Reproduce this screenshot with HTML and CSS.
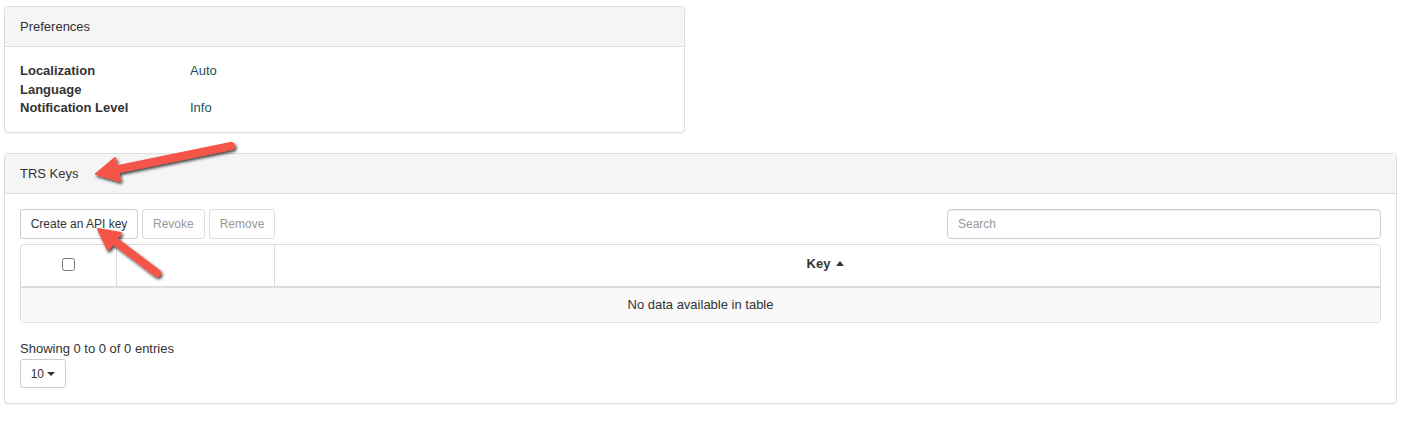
FILE: index.html
```html
<!DOCTYPE html>
<html>
<head>
<meta charset="utf-8">
<link rel="stylesheet" href="styles.css">
</head>
<body>
<div class="page">
  <div class="panel panel-prefs">
    <div class="panel-heading">Preferences</div>
    <div class="panel-body prefs-body">
      <div class="pref-row"><span class="pref-label">Localization</span><span class="pref-value">Auto</span></div>
      <div class="pref-row"><span class="pref-label">Language</span><span class="pref-value"></span></div>
      <div class="pref-row"><span class="pref-label">Notification Level</span><span class="pref-value">Info</span></div>
    </div>
  </div>

  <div class="panel panel-keys">
    <div class="panel-heading">TRS Keys</div>
    <div class="panel-body">
      <div class="toolbar">
        <div class="btn-group">
          <button class="btn btn-create">Create an API key</button>
          <button class="btn btn-disabled">Revoke</button>
          <button class="btn btn-disabled">Remove</button>
        </div>
        <input class="search" type="text" placeholder="Search">
      </div>
      <div class="table-wrap">
        <table class="keys-table">
          <thead>
            <tr>
              <th class="col-check"><input type="checkbox" class="check"></th>
              <th class="col-blank"></th>
              <th class="col-key">Key <span class="sort-up"></span></th>
            </tr>
          </thead>
          <tbody>
            <tr><td colspan="3" class="empty">No data available in table</td></tr>
          </tbody>
        </table>
      </div>
      <div class="info">Showing 0 to 0 of 0 entries</div>
      <button class="btn btn-len">10 <span class="caret"></span></button>
    </div>
  </div>

  <svg class="annotations" width="1407" height="421" viewBox="0 0 1407 421">
    <defs>
      <filter id="shadow" x="-20%" y="-40%" width="140%" height="180%">
        <feDropShadow dx="1.5" dy="2" stdDeviation="1.6" flood-color="#000" flood-opacity="0.75"/>
      </filter>
    </defs>
    <g filter="url(#shadow)" fill="#f5554a" stroke="#f5554a">
      <line x1="231" y1="146" x2="114" y2="170" stroke-width="8" stroke-linecap="round"/>
      <polygon points="96,174 120,181 115,158" stroke-width="2" stroke-linejoin="round"/>
      <line x1="157" y1="273" x2="112" y2="239" stroke-width="8" stroke-linecap="round"/>
      <polygon points="98,229 121,233 108,250" stroke-width="2" stroke-linejoin="round"/>
    </g>
  </svg>
</div>
</body>
</html>
```

FILE: styles.css
```css
* { box-sizing: border-box; }
html, body { margin: 0; padding: 0; background: #fff; }
body {
  font-family: "Liberation Sans", Arial, sans-serif;
  font-size: 13px;
  line-height: 1.42857;
  color: #333;
}
.page {
  position: relative;
  padding: 6px 10px 0 4px;
  width: 1407px;
  height: 421px;
}
.panel {
  background: #fff;
  border: 1px solid #ddd;
  border-radius: 4px;
  box-shadow: 0 1px 1px rgba(0,0,0,0.05);
  margin-bottom: 20px;
}
.panel-prefs { width: 681px; }
.panel-heading {
  background: #f5f5f5;
  border-bottom: 1px solid #ddd;
  border-radius: 3px 3px 0 0;
  padding: 11px 15px 9px;
  height: 40px;
  color: #333;
}
.panel-body { padding: 15px; }
.prefs-body { padding-bottom: 14px; }
.pref-row { display: flex; height: 18.5px; }
.pref-label { width: 170px; font-weight: bold; }
.pref-value { color: #244f5e; }

.toolbar {
  display: flex;
  justify-content: space-between;
  align-items: center;
}
.btn-group { display: flex; gap: 4px; }
.btn {
  font-family: inherit;
  font-size: 12px;
  height: 30px;
  padding: 0 10px;
  background: #fff;
  color: #333;
  border: 1px solid #ccc;
  border-radius: 3px;
}
.btn-create { padding: 0 9px; width: 118px; }
.btn-disabled { color: #999; border-color: #ddd; }
.search {
  width: 434px;
  height: 30px;
  border: 1px solid #ccc;
  border-radius: 4px;
  padding: 0 10px;
  font-family: inherit;
  font-size: 12px;
  color: #555;
  box-shadow: inset 0 1px 1px rgba(0,0,0,0.075);
}
.search::placeholder { color: #999; }

.table-wrap {
  margin-top: 5px;
  border: 1px solid #ddd;
  border-radius: 4px;
  overflow: hidden;
}
.keys-table {
  width: 100%;
  border-collapse: collapse;
}
.keys-table th {
  height: 42px;
  border-bottom: 2px solid #ddd;
  border-left: 1px solid #ddd;
  font-weight: bold;
  text-align: center;
  padding: 0 10px 1px;
}
.keys-table th:first-child { border-left: none; }
.col-check { width: 95px; }
.col-blank { width: 158px; }
.col-key { padding-right: 14px !important; }
.check {
  margin: 0;
  width: 13px;
  height: 13px;
  vertical-align: middle;
}
.sort-up {
  display: inline-block;
  width: 0; height: 0;
  border-left: 4px solid transparent;
  border-right: 4px solid transparent;
  border-bottom: 5px solid #333;
  vertical-align: 2px;
  margin-left: 2px;
}
.empty {
  background: #f9f9f9;
  text-align: center;
  height: 35px;
  padding: 0 0 0;
  padding-top: 1px;
}
.info { margin-top: 17px; }
.btn-len {
  height: 29px;
  width: 46px;
  padding: 0 9px;
  margin-top: 1px;
  border-radius: 3px;
}
.caret {
  display: inline-block;
  width: 0; height: 0;
  border-left: 4px solid transparent;
  border-right: 4px solid transparent;
  border-top: 4px solid #333;
  vertical-align: 2px;
}
.annotations {
  position: absolute;
  left: 0;
  top: 0;
  pointer-events: none;
}
```
